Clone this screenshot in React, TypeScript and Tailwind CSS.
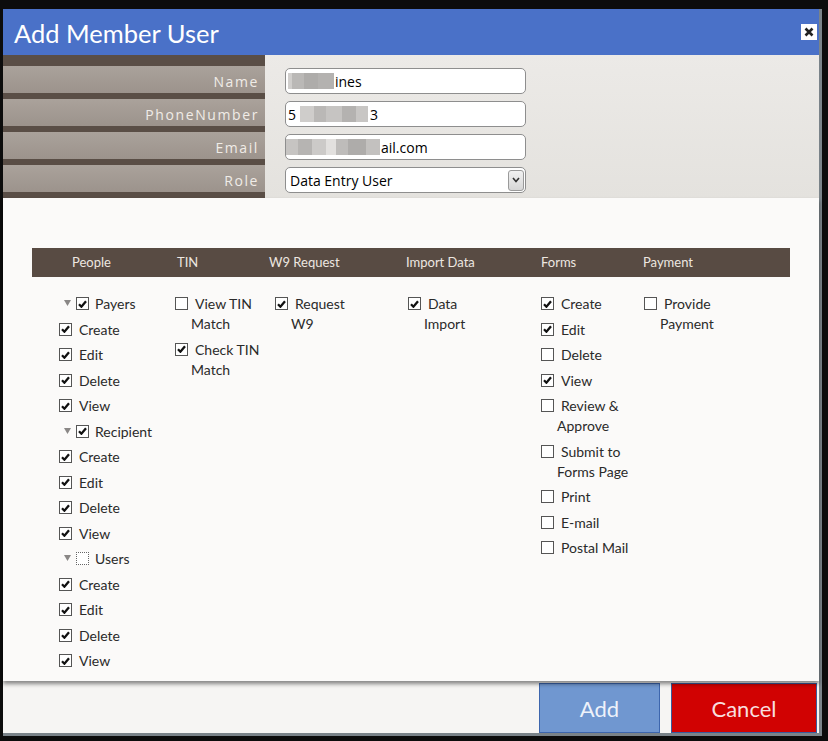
import React from 'react';

type Item = { lines: string[]; checked: boolean; group?: boolean; dotted?: boolean };

const people: Item[] = [
  { lines: ['Payers'], checked: true, group: true },
  { lines: ['Create'], checked: true },
  { lines: ['Edit'], checked: true },
  { lines: ['Delete'], checked: true },
  { lines: ['View'], checked: true },
  { lines: ['Recipient'], checked: true, group: true },
  { lines: ['Create'], checked: true },
  { lines: ['Edit'], checked: true },
  { lines: ['Delete'], checked: true },
  { lines: ['View'], checked: true },
  { lines: ['Users'], checked: false, group: true, dotted: true },
  { lines: ['Create'], checked: true },
  { lines: ['Edit'], checked: true },
  { lines: ['Delete'], checked: true },
  { lines: ['View'], checked: true },
];

const tin: Item[] = [
  { lines: ['View TIN', 'Match'], checked: false },
  { lines: ['Check TIN', 'Match'], checked: true },
];

const w9: Item[] = [{ lines: ['Request', 'W9'], checked: true }];
const importData: Item[] = [{ lines: ['Data', 'Import'], checked: true }];

const forms: Item[] = [
  { lines: ['Create'], checked: true },
  { lines: ['Edit'], checked: true },
  { lines: ['Delete'], checked: false },
  { lines: ['View'], checked: true },
  { lines: ['Review &', 'Approve'], checked: false },
  { lines: ['Submit to', 'Forms Page'], checked: false },
  { lines: ['Print'], checked: false },
  { lines: ['E-mail'], checked: false },
  { lines: ['Postal Mail'], checked: false },
];

const payment: Item[] = [{ lines: ['Provide', 'Payment'], checked: false }];

function Check({ checked, dotted }: { checked: boolean; dotted?: boolean }) {
  return (
    <span
      className={`mt-[3px] flex h-[13px] w-[13px] shrink-0 items-center justify-center bg-white border ${
        dotted ? 'border-dotted border-[#666]' : 'border-[#555]'
      }`}
    >
      {checked && (
        <svg width="9" height="8" viewBox="0 0 9 8">
          <path d="M1 4.3 L3.4 6.7 L8 1.2" stroke="#111" strokeWidth="2.3" fill="none" />
        </svg>
      )}
    </span>
  );
}

function Row({ item }: { item: Item }) {
  return (
    <div className="flex items-start">
      {item.group && (
        <svg width="7" height="6" viewBox="0 0 7 6" className="ml-[5px] mr-[5px] mt-[6px] shrink-0">
          <path d="M0 0 H7 L3.5 6 Z" fill="#8a8786" />
        </svg>
      )}
      <Check checked={item.checked} dotted={item.dotted} />
      <div className={`${item.group ? 'ml-[6px]' : 'ml-[7px]'} whitespace-nowrap`}>
        {item.lines.map((l, i) => (
          <div key={i} className={i > 0 ? '-ml-[4px]' : ''}>
            {l}
          </div>
        ))}
      </div>
    </div>
  );
}

function Column({ items, width }: { items: Item[]; width: string }) {
  return (
    <div className={`flex flex-col gap-[5.5px] ${width}`}>
      {items.map((it, i) => (
        <Row key={i} item={it} />
      ))}
    </div>
  );
}

// pixelated blur blocks standing in for masked input text
function Blur({ blocks }: { blocks: [number, string][] }) {
  return (
    <span className="inline-flex h-[16px] items-stretch align-middle">
      {blocks.map(([w, c], i) => (
        <span key={i} style={{ width: w, background: c }} />
      ))}
    </span>
  );
}

const labels = ['Name', 'PhoneNumber', 'Email', 'Role'];

export default function App() {
  return (
    <div className="h-[741px] w-[828px] overflow-hidden bg-[#0c0c0c] pl-[3px] pt-[9px]">
      <div className="w-[819px] border-b-[3px] border-r-[3px] border-[#7a8389] bg-[#f6f5f3]">
        {/* Title bar */}
        <div className="flex h-[46px] items-center justify-between bg-[#4a71c8] pl-[11px] pr-[2px]">
          <span className="pt-[4px] font-['Lato',sans-serif] text-[25.5px] leading-none text-white">Add Member User</span>
          <button className="flex h-[16px] w-[16px] items-center justify-center bg-white">
            <svg width="10" height="10" viewBox="0 0 10 10">
              <path d="M1.5 1.5 L8.5 8.5 M8.5 1.5 L1.5 8.5" stroke="#222" strokeWidth="2.6" />
            </svg>
          </button>
        </div>

        {/* Member details */}
        <div className="flex h-[143px]">
          <div className="flex w-[262px] flex-col bg-[#5a4e46] pt-[11px]">
            {labels.map(l => (
              <div
                key={l}
                className="mb-[6px] flex h-[27px] items-center justify-end bg-gradient-to-b from-[#aaa29b] to-[#9c938c] pr-[6px] pt-[3px] font-['Open_Sans',sans-serif] text-[14px] tracking-[1.6px] text-[#f0ece7]"
              >
                {l}
              </div>
            ))}
          </div>
          <div className="flex flex-1 flex-col bg-gradient-to-b from-[#eceae7] to-[#e4e2de] pl-[20px] pt-[13px] font-['Open_Sans',sans-serif] text-[14px] text-black">
            <div className="mb-[7px] flex h-[26px] w-[241px] items-center rounded-[5px] border border-[#8e8e8e] bg-white px-[2px]">
              <Blur blocks={[[4, '#d0cecc'], [12, '#bab8b6'], [14, '#aeacaa'], [16, '#b4b2b0']]} />
              <span className="ml-[1px]">ines</span>
            </div>
            <div className="mb-[7px] flex h-[26px] w-[241px] items-center rounded-[5px] border border-[#8e8e8e] bg-white px-[2px]">
              <span>5</span>
              <Blur blocks={[[4, '#ffffff'], [14, '#cfcdcb'], [12, '#bab8b6'], [16, '#c6c4c2'], [14, '#b4b2b0'], [12, '#c8c6c4']]} />
              <span className="ml-[2px]">3</span>
            </div>
            <div className="mb-[7px] flex h-[26px] w-[241px] items-center rounded-[5px] border border-[#8e8e8e] bg-white">
              <Blur blocks={[[12, '#c6c4c2'], [14, '#b6b4b2'], [14, '#cccac8'], [10, '#e2e0de'], [12, '#bebcba'], [18, '#aeacaa'], [14, '#c3c1bf']]} />
              <span className="ml-[1px]">ail.com</span>
            </div>
            <div className="flex h-[26px] w-[241px] items-center justify-between rounded-[5px] border border-[#8e8e8e] bg-white pl-[4px] pr-[1px]">
              <span>Data Entry User</span>
              <span className="flex h-[21px] w-[16px] items-center justify-center rounded-[3px] border border-[#9a9a9a] bg-gradient-to-b from-[#f2f2f2] to-[#d6d6d6]">
                <svg width="8" height="6" viewBox="0 0 8 6">
                  <path d="M1 1 L4 4.5 L7 1" stroke="#333" strokeWidth="1.6" fill="none" />
                </svg>
              </span>
            </div>
          </div>
        </div>

        {/* Permissions */}
        <div className="relative z-10 h-[483px] bg-[#fbfaf9] pl-[29px] pt-[50px] shadow-[0_3px_4px_rgba(0,0,0,0.45)]">
          <div className="flex h-[29px] w-[758px] items-center bg-[#584b43] pl-[40px] pt-[1px] font-['Lato',sans-serif] text-[13px] text-[#ede7e0]">
            <div className="w-[105px]">People</div>
            <div className="w-[92px]">TIN</div>
            <div className="w-[137px]">W9 Request</div>
            <div className="w-[135px]">Import Data</div>
            <div className="w-[102px]">Forms</div>
            <div>Payment</div>
          </div>
          <div className="flex pl-[27px] pt-[17px] font-['Lato',sans-serif] text-[14px] leading-[20px] text-[#2a2a2a]">
            <Column items={people} width="w-[116px]" />
            <Column items={tin} width="w-[100px]" />
            <Column items={w9} width="w-[133px]" />
            <Column items={importData} width="w-[133px]" />
            <Column items={forms} width="w-[103px]" />
            <Column items={payment} width="w-[100px]" />
          </div>
        </div>

        {/* Footer */}
        <div className="flex h-[52px] justify-end gap-[11px] pr-[2px] pt-[2px] font-['Lato',sans-serif] text-[22px]">
          <button className="flex h-[50px] w-[121px] items-center justify-center border border-[#3d66ad] bg-[#7097d0] text-[#eef2fa]">
            Add
          </button>
          <button className="flex h-[50px] w-[146px] items-center justify-center border border-[#3b5c9c] bg-[#d10202] text-[#f8dede]">
            Cancel
          </button>
        </div>
      </div>
    </div>
  );
}
